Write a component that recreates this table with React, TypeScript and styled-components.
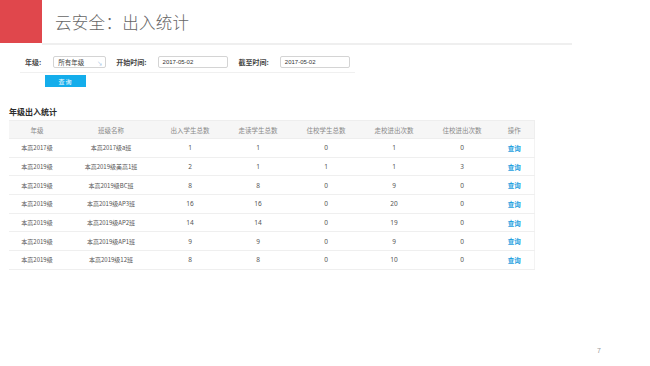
import React, { ReactElement } from "react"
import styled, { createGlobalStyle } from "styled-components"

const GlobalStyle = createGlobalStyle`
	html, body {
		margin: 0;
		padding: 0;
		background: #ffffff;
	}
	body {
		font-family: "Noto Sans CJK SC", "Noto Sans", "Liberation Sans", sans-serif;
	}
`

const Page = styled.div`
	display: flex;
	flex-direction: column;
	width: 650px;
	height: 366px;
	box-sizing: border-box;
	background: #ffffff;
	overflow: hidden;
`

const Header = styled.div`
	display: flex;
	align-items: flex-start;
	height: 45px;
`

const RedBlock = styled.div`
	width: 42px;
	height: 43px;
	background: #e0474c;
`

const TitleBar = styled.div`
	display: flex;
	align-items: center;
	width: 530px;
	height: 45px;
	box-sizing: border-box;
	border-bottom: 2px solid #efefef;
	padding-left: 13px;
`

const Title = styled.h1`
	margin: 0;
	font-size: 16.5px;
	font-weight: 300;
	color: #666666;
	letter-spacing: 0.3px;
`

const FilterRow = styled.div`
	display: flex;
	align-items: center;
	margin: 11px 0 0 20px;
	width: 335px;
	padding: 0 0 4px 5px;
	box-sizing: border-box;
	border-bottom: 1px solid #f0f0f0;
`

const Label = styled.span<{ $gap: number }>`
	font-size: 7px;
	font-weight: 700;
	color: #444444;
	margin-right: ${(p) => p.$gap}px;
`

const Field = styled.div<{ $width: number; $after: number }>`
	position: relative;
	display: flex;
	align-items: center;
	width: ${(p) => p.$width}px;
	height: 12px;
	box-sizing: border-box;
	border: 1px solid #d4d4d4;
	border-radius: 2px;
	padding-left: 4px;
	margin-right: ${(p) => p.$after}px;
	font-size: 6px;
	color: #333333;
	font-family: "Liberation Sans", "Noto Sans CJK SC", sans-serif;
`

const SelectText = styled.span`
	font-family: "Noto Sans CJK SC", sans-serif;
	font-size: 6.5px;
	color: #444444;
`

const Caret = styled.span`
	position: absolute;
	right: 3px;
	bottom: 1px;
	font-size: 5px;
	color: #7aa7d8;
`

const SearchButton = styled.button`
	display: block;
	margin: 2px 0 0 45px;
	width: 41px;
	height: 12px;
	padding: 0;
	border: none;
	background: #14adeb;
	color: #ffffff;
	font-family: "Noto Sans CJK SC", sans-serif;
	font-size: 6px;
	letter-spacing: 1px;
`

const SectionTitle = styled.h2`
	margin: 19px 0 0 9px;
	font-size: 8px;
	font-weight: 700;
	color: #2b2b2b;
	line-height: 11px;
`

const Table = styled.table`
	margin: 3px 0 0 9px;
	width: 525px;
	border-collapse: collapse;
	table-layout: fixed;
	font-size: 6px;
`

const HeadCell = styled.th`
	height: 17px;
	padding: 0;
	background: #f6f6f6;
	border-top: 1px solid #eeeeee;
	border-bottom: 1px solid #eeeeee;
	font-weight: 400;
	font-size: 6.5px;
	color: #8a8a8a;
	text-align: center;
	&:last-child {
		border-right: 1px solid #eeeeee;
	}
`

const Cell = styled.td`
	height: 17.7px;
	padding: 0;
	border-bottom: 1px solid #efefef;
	text-align: center;
	color: #555555;
	font-size: 6px;
	&:last-child {
		border-right: 1px solid #f3f3f3;
	}
`

const Num = styled.span`
	font-family: "Noto Sans", "Liberation Sans", sans-serif;
	font-size: 6.5px;
`

const QueryLink = styled.a`
	color: #1d9fe0;
	font-weight: 700;
	font-size: 6.5px;
	text-decoration: none;
`

const Footer = styled.div`
	margin-top: auto;
	padding: 0 49px 12px 0;
	text-align: right;
	font-family: "Liberation Sans", sans-serif;
	font-size: 7px;
	color: #9a9a9a;
`

const columns = [
	{ name: "年级", width: 56 },
	{ name: "班级名称", width: 92 },
	{ name: "出入学生总数", width: 66 },
	{ name: "走读学生总数", width: 70 },
	{ name: "住校学生总数", width: 66 },
	{ name: "走校进出次数", width: 70 },
	{ name: "住校进出次数", width: 66 },
	{ name: "操作", width: 39 },
]

const rows = [
	["本高2017级", "本高2017级a班", 1, 1, 0, 1, 0],
	["本高2019级", "本高2019级美高1班", 2, 1, 1, 1, 3],
	["本高2019级", "本高2019级BC班", 8, 8, 0, 9, 0],
	["本高2019级", "本高2019级AP3班", 16, 16, 0, 20, 0],
	["本高2019级", "本高2019级AP2班", 14, 14, 0, 19, 0],
	["本高2019级", "本高2019级AP1班", 9, 9, 0, 9, 0],
	["本高2019级", "本高2019级12班", 8, 8, 0, 10, 0],
]

export default function App(): ReactElement {
	return (
		<Page>
			<GlobalStyle />
			<Header>
				<RedBlock />
				<TitleBar>
					<Title>云安全：出入统计</Title>
				</TitleBar>
			</Header>

			<FilterRow>
				<Label $gap={12}>年级:</Label>
				<Field $width={53} $after={10}>
					<SelectText>所有年级</SelectText>
					<Caret>↘</Caret>
				</Field>
				<Label $gap={11}>开始时间:</Label>
				<Field $width={70} $after={11}>2017-05-02</Field>
				<Label $gap={11}>截至时间:</Label>
				<Field $width={70} $after={0}>2017-05-02</Field>
			</FilterRow>
			<SearchButton type="button">查询</SearchButton>

			<SectionTitle>年级出入统计</SectionTitle>
			<Table>
				<colgroup>
					{columns.map((c) => (
						<col key={c.name} style={{ width: c.width }} />
					))}
				</colgroup>
				<thead>
					<tr>
						{columns.map((c) => (
							<HeadCell key={c.name}>{c.name}</HeadCell>
						))}
					</tr>
				</thead>
				<tbody>
					{rows.map((r, i) => (
						<tr key={i}>
							<Cell>{r[0]}</Cell>
							<Cell>{r[1]}</Cell>
							{r.slice(2).map((v, j) => (
								<Cell key={j}>
									<Num>{v}</Num>
								</Cell>
							))}
							<Cell>
								<QueryLink href="#">查询</QueryLink>
							</Cell>
						</tr>
					))}
				</tbody>
			</Table>

			<Footer>7</Footer>
		</Page>
	)
}
